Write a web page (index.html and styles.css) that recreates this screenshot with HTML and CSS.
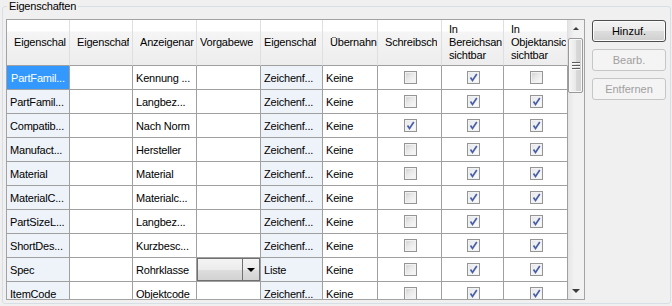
FILE: index.html
```html
<!DOCTYPE html>
<html lang="de">
<head>
    <meta charset="UTF-8">
    <title>Eigenschaften</title>
    <link rel="stylesheet" href="styles.css">
</head>
<body>
    <fieldset class="group">
        <legend>Eigenschaften</legend>
        <div class="group-body">
            <div class="grid">
                <div class="grid-main">
                    <div class="grid-head">
                        <div class="hcell"><span>Eigenschal</span></div>
                        <div class="hcell"><span>Eigenschaf</span></div>
                        <div class="hcell"><span>Anzeigenar</span></div>
                        <div class="hcell tight"><span>Vorgabewe</span></div>
                        <div class="hcell tight"><span>Eigenschaf</span></div>
                        <div class="hcell"><span>Übernahn</span></div>
                        <div class="hcell"><span>Schreibsch</span></div>
                        <div class="hcell"><span>In<br>Bereichsan<br>sichtbar</span></div>
                        <div class="hcell"><span>In<br>Objektansic<br>sichtbar</span></div>
                    </div>
                    <div class="grid-rows">
                        <div class="row">
                            <div class="cell ro sel">PartFamil...</div><div class="cell"></div><div class="cell">Kennung ...</div><div class="cell"></div><div class="cell ro">Zeichenf...</div><div class="cell">Keine</div>
                            <div class="cell chk"><span class="cb"></span></div>
                            <div class="cell chk"><span class="cb on"><svg viewBox="0 0 11 11"><path d="M2.5 5.5 L4.5 8.5 L8.8 2"/></svg></span></div>
                            <div class="cell chk"><span class="cb"></span></div>
                        </div>
                        <div class="row">
                            <div class="cell ro">PartFamil...</div><div class="cell"></div><div class="cell">Langbez...</div><div class="cell"></div><div class="cell ro">Zeichenf...</div><div class="cell">Keine</div>
                            <div class="cell chk"><span class="cb"></span></div>
                            <div class="cell chk"><span class="cb on"><svg viewBox="0 0 11 11"><path d="M2.5 5.5 L4.5 8.5 L8.8 2"/></svg></span></div>
                            <div class="cell chk"><span class="cb on"><svg viewBox="0 0 11 11"><path d="M2.5 5.5 L4.5 8.5 L8.8 2"/></svg></span></div>
                        </div>
                        <div class="row">
                            <div class="cell ro">Compatib...</div><div class="cell"></div><div class="cell">Nach Norm</div><div class="cell"></div><div class="cell ro">Zeichenf...</div><div class="cell">Keine</div>
                            <div class="cell chk"><span class="cb on"><svg viewBox="0 0 11 11"><path d="M2.5 5.5 L4.5 8.5 L8.8 2"/></svg></span></div>
                            <div class="cell chk"><span class="cb on"><svg viewBox="0 0 11 11"><path d="M2.5 5.5 L4.5 8.5 L8.8 2"/></svg></span></div>
                            <div class="cell chk"><span class="cb on"><svg viewBox="0 0 11 11"><path d="M2.5 5.5 L4.5 8.5 L8.8 2"/></svg></span></div>
                        </div>
                        <div class="row">
                            <div class="cell ro">Manufact...</div><div class="cell"></div><div class="cell">Hersteller</div><div class="cell"></div><div class="cell ro">Zeichenf...</div><div class="cell">Keine</div>
                            <div class="cell chk"><span class="cb"></span></div>
                            <div class="cell chk"><span class="cb on"><svg viewBox="0 0 11 11"><path d="M2.5 5.5 L4.5 8.5 L8.8 2"/></svg></span></div>
                            <div class="cell chk"><span class="cb on"><svg viewBox="0 0 11 11"><path d="M2.5 5.5 L4.5 8.5 L8.8 2"/></svg></span></div>
                        </div>
                        <div class="row">
                            <div class="cell ro">Material</div><div class="cell"></div><div class="cell">Material</div><div class="cell"></div><div class="cell ro">Zeichenf...</div><div class="cell">Keine</div>
                            <div class="cell chk"><span class="cb"></span></div>
                            <div class="cell chk"><span class="cb on"><svg viewBox="0 0 11 11"><path d="M2.5 5.5 L4.5 8.5 L8.8 2"/></svg></span></div>
                            <div class="cell chk"><span class="cb on"><svg viewBox="0 0 11 11"><path d="M2.5 5.5 L4.5 8.5 L8.8 2"/></svg></span></div>
                        </div>
                        <div class="row">
                            <div class="cell ro">MaterialC...</div><div class="cell"></div><div class="cell">Materialc...</div><div class="cell"></div><div class="cell ro">Zeichenf...</div><div class="cell">Keine</div>
                            <div class="cell chk"><span class="cb"></span></div>
                            <div class="cell chk"><span class="cb on"><svg viewBox="0 0 11 11"><path d="M2.5 5.5 L4.5 8.5 L8.8 2"/></svg></span></div>
                            <div class="cell chk"><span class="cb on"><svg viewBox="0 0 11 11"><path d="M2.5 5.5 L4.5 8.5 L8.8 2"/></svg></span></div>
                        </div>
                        <div class="row">
                            <div class="cell ro">PartSizeL...</div><div class="cell"></div><div class="cell">Langbez...</div><div class="cell"></div><div class="cell ro">Zeichenf...</div><div class="cell">Keine</div>
                            <div class="cell chk"><span class="cb"></span></div>
                            <div class="cell chk"><span class="cb on"><svg viewBox="0 0 11 11"><path d="M2.5 5.5 L4.5 8.5 L8.8 2"/></svg></span></div>
                            <div class="cell chk"><span class="cb on"><svg viewBox="0 0 11 11"><path d="M2.5 5.5 L4.5 8.5 L8.8 2"/></svg></span></div>
                        </div>
                        <div class="row">
                            <div class="cell ro">ShortDes...</div><div class="cell"></div><div class="cell">Kurzbesc...</div><div class="cell"></div><div class="cell ro">Zeichenf...</div><div class="cell">Keine</div>
                            <div class="cell chk"><span class="cb"></span></div>
                            <div class="cell chk"><span class="cb on"><svg viewBox="0 0 11 11"><path d="M2.5 5.5 L4.5 8.5 L8.8 2"/></svg></span></div>
                            <div class="cell chk"><span class="cb on"><svg viewBox="0 0 11 11"><path d="M2.5 5.5 L4.5 8.5 L8.8 2"/></svg></span></div>
                        </div>
                        <div class="row">
                            <div class="cell ro">Spec</div><div class="cell"></div><div class="cell">Rohrklasse</div>
                            <div class="cell combo-cell"><div class="combo"><div class="combo-text"></div><div class="combo-btn"><i class="down"></i></div></div></div>
                            <div class="cell ro">Liste</div><div class="cell">Keine</div>
                            <div class="cell chk"><span class="cb"></span></div>
                            <div class="cell chk"><span class="cb on"><svg viewBox="0 0 11 11"><path d="M2.5 5.5 L4.5 8.5 L8.8 2"/></svg></span></div>
                            <div class="cell chk"><span class="cb on"><svg viewBox="0 0 11 11"><path d="M2.5 5.5 L4.5 8.5 L8.8 2"/></svg></span></div>
                        </div>
                        <div class="row">
                            <div class="cell ro">ItemCode</div><div class="cell"></div><div class="cell">Objektcode</div><div class="cell"></div><div class="cell ro">Zeichenf...</div><div class="cell">Keine</div>
                            <div class="cell chk"><span class="cb"></span></div>
                            <div class="cell chk"><span class="cb on"><svg viewBox="0 0 11 11"><path d="M2.5 5.5 L4.5 8.5 L8.8 2"/></svg></span></div>
                            <div class="cell chk"><span class="cb on"><svg viewBox="0 0 11 11"><path d="M2.5 5.5 L4.5 8.5 L8.8 2"/></svg></span></div>
                        </div>
                    </div>
                </div>
                <div class="vscroll">
                    <div class="sb-btn"><i class="up"></i></div>
                    <div class="thumb"><div class="grip"></div></div>
                    <div class="sb-track"></div>
                    <div class="sb-btn"><i class="down small"></i></div>
                </div>
            </div>
            <div class="actions">
                <button class="btn default">Hinzuf.</button>
                <button class="btn" disabled>Bearb.</button>
                <button class="btn" disabled>Entfernen</button>
            </div>
        </div>
    </fieldset>
</body>
</html>
```

FILE: styles.css
```css
body {
    margin: 0;
    background: #f0f0f0;
    font-family: "Liberation Sans", Arial, sans-serif;
    font-size: 11px;
    letter-spacing: -0.2px;
    color: #000;
}

.group {
    box-sizing: border-box;
    width: 669px;
    min-width: 0;
    margin: 0 0 0 2px;
    padding: 6px 4px 3px 3px;
    border: 1px solid #d5dfe5;
    border-radius: 3px;
}

.group legend {
    margin-left: 1px;
    padding: 0 2px;
    line-height: 13px;
}

.group-body {
    display: flex;
}

/* data grid */
.grid {
    box-sizing: border-box;
    display: flex;
    width: 579px;
    height: 281px;
    border: 1px solid #a3a3a3;
    background: #fff;
}

.grid-main {
    width: 561px;
    display: flex;
    flex-direction: column;
}

.grid-head, .row {
    display: grid;
    grid-template-columns: 63px 63px 64px 64px 62px 55px 64px 62px 64px;
}

.grid-head {
    height: 46px;
}

.hcell {
    box-sizing: border-box;
    display: flex;
    align-items: center;
    padding: 0 0 0 7px;
    border-right: 1px solid #dedfe1;
    border-bottom: 1px solid #a0a0a0;
    background: linear-gradient(#ffffff 0, #ffffff 11px, #f5f5f5 12px, #ededed 100%);
    line-height: 13px;
}

.hcell.tight {
    padding-left: 3px;
}

.hcell span {
    display: block;
    overflow: hidden;
    white-space: nowrap;
}

.grid-rows {
    height: 233px;
    overflow: hidden;
}

.row {
    height: 24px;
}

.cell {
    box-sizing: border-box;
    display: flex;
    align-items: center;
    padding: 0 2px 0 3px;
    border-right: 1px solid #a0a0a0;
    border-bottom: 1px solid #a0a0a0;
    white-space: nowrap;
    overflow: hidden;
}

.cell.ro {
    background: #eef3fa;
}

.cell.sel {
    background: #3399ff;
    color: #fff;
    padding-left: 4px;
}

.cell.chk {
    justify-content: center;
}

.cell.combo-cell {
    padding: 0;
    align-items: stretch;
}

/* checkbox */
.cb {
    box-sizing: border-box;
    width: 13px;
    height: 13px;
    border: 1px solid #959595;
    background: linear-gradient(135deg, #cfcfcf 0%, #e9e9e9 45%, #fbfbfb 100%);
    box-shadow: inset 0 0 0 1px #f2f2f2;
}

.cb.on {
    background: linear-gradient(135deg, #e4e6ea 0%, #f1f2f4 50%, #fdfdfd 100%);
}

.cb svg {
    display: block;
    width: 11px;
    height: 11px;
}

.cb path {
    fill: none;
    stroke: #4a5fa8;
    stroke-width: 1.7;
}

/* combo box inside the grid */
.combo {
    box-sizing: border-box;
    flex: 1;
    display: flex;
    border: 1px solid #707070;
    background: linear-gradient(#f4f4f4 0, #ececec 50%, #dedede 51%, #d2d2d2 100%);
}

.combo-text {
    flex: 1;
}

.combo-btn {
    width: 16px;
    display: flex;
    align-items: center;
    justify-content: center;
    border-left: 1px solid #707070;
}

.down {
    display: block;
    width: 0;
    height: 0;
    border-left: 4px solid transparent;
    border-right: 4px solid transparent;
    border-top: 4px solid #000;
}

.down.small {
    border-top-color: #3c3c3c;
}

.up {
    display: block;
    width: 0;
    height: 0;
    border-left: 3px solid transparent;
    border-right: 3px solid transparent;
    border-bottom: 3px solid #3c3c3c;
}

/* vertical scrollbar */
.vscroll {
    width: 16px;
    display: flex;
    flex-direction: column;
    background: linear-gradient(to right, #e4e4e4, #f2f2f2 40%, #f2f2f2);
}

.sb-btn {
    height: 17px;
    display: flex;
    align-items: center;
    justify-content: center;
}

.thumb {
    box-sizing: border-box;
    width: 15px;
    height: 55px;
    margin-top: 1px;
    display: flex;
    align-items: center;
    justify-content: center;
    border: 1px solid #999;
    border-radius: 2px;
    background: linear-gradient(to right, #f6f6f6, #e9e9e9 50%, #dadada 50%, #d0d0d0);
    box-shadow: inset 0 0 0 1px #f8f8f8;
}

.grip {
    width: 8px;
    height: 8px;
    background: repeating-linear-gradient(#5e5e5e 0, #5e5e5e 1px, #fbfbfb 1px, #fbfbfb 2px, transparent 2px, transparent 3px);
}

.sb-track {
    flex: 1;
}

/* buttons */
.actions {
    display: flex;
    flex-direction: column;
    gap: 7px;
    margin-left: 7px;
    padding-top: 1px;
}

.btn {
    box-sizing: border-box;
    width: 74px;
    height: 22px;
    padding: 0;
    font: inherit;
    color: #000;
    border: 1px solid #707070;
    border-radius: 3px;
    background: linear-gradient(#f2f2f2 0, #ebebeb 50%, #dddddd 51%, #cfcfcf 100%);
    box-shadow: inset 0 0 0 1px #fcfcfc;
}

.btn.default {
    border-color: #4d4d4d;
}

.btn:disabled {
    color: #a0a0a0;
    border-color: #c4c6c8;
    background: #f4f4f4;
    box-shadow: none;
}
```
